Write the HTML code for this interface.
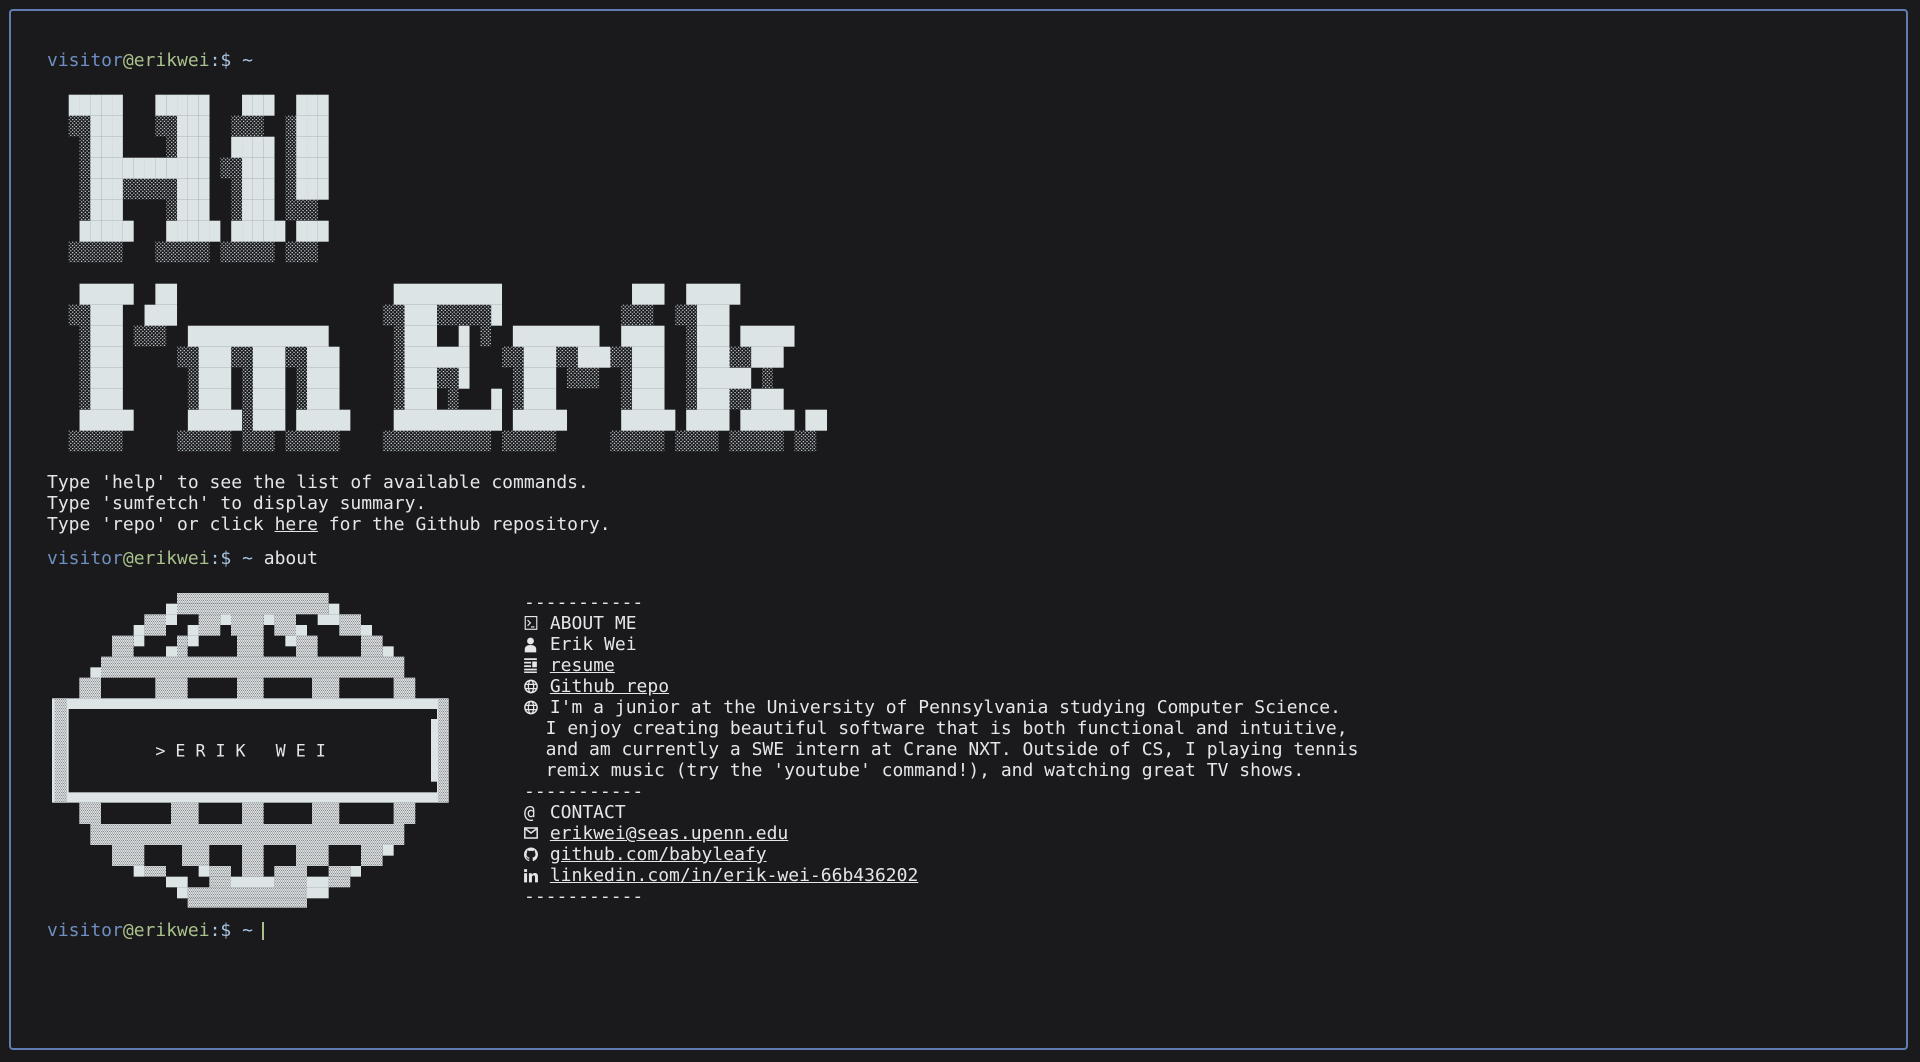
<!DOCTYPE html>
<html><head><meta charset="utf-8">
<style>
html,body{margin:0;padding:0;background:#1a1a1d;}
body{width:1920px;height:1062px;position:relative;overflow:hidden;font-family:"DejaVu Sans Mono","Liberation Mono",monospace;font-size:18px;line-height:21px;color:#e4e6e8;}
.frame{position:absolute;left:9px;top:9px;width:1899px;height:1041px;border:2px solid #5f7db0;border-radius:4px;box-sizing:border-box;}
.ln{position:absolute;white-space:pre;height:21px;}
.u{color:#6f8fc0}.g{color:#a9c18c}.b{color:#a8c4e0}
a{color:#e4e6e8;text-decoration:underline;}
.ic{display:inline-block;width:15px;height:21px;vertical-align:top;position:relative;}
.ic svg{position:absolute;left:0;top:3px;}
.cursor{position:absolute;left:262px;top:922px;width:1.5px;height:18px;background:#a9c18c;}
</style></head>
<body>
<div class="frame"></div>

<div class="ln" style="left:47px;top:50px"><span class="u">visitor</span><span class="g">@erikwei</span><span class="b">:$ ~</span></div>

<svg id="art" style="position:absolute;left:0;top:0" width="1920" height="480">
<defs>
<pattern id="sh" width="3.6" height="3.5" patternUnits="userSpaceOnUse">
<rect x="0" y="0" width="1.3" height="1.2" fill="#c9d2d6"/>
<rect x="1.8" y="1.75" width="1.3" height="1.2" fill="#c9d2d6"/>
</pattern>
</defs>
<g id="artg"></g>
</svg>

<div class="ln" style="left:47px;top:472px">Type 'help' to see the list of available commands.</div>
<div class="ln" style="left:47px;top:493px">Type 'sumfetch' to display summary.</div>
<div class="ln" style="left:47px;top:514px">Type 'repo' or click <a>here</a> for the Github repository.</div>

<div class="ln" style="left:47px;top:548px"><span class="u">visitor</span><span class="g">@erikwei</span><span class="b">:$ ~</span> about</div>

<svg style="position:absolute;left:47px;top:585px" width="410" height="330" viewBox="0 0 1230 990">
<defs>
<pattern id="sh2" width="6" height="9" patternUnits="userSpaceOnUse">
<rect width="6" height="9" fill="#d6dcdf"/>
<rect x="0" y="0" width="1.5" height="3" fill="#3a3f48"/>
<rect x="3" y="4.5" width="1.5" height="3" fill="#5a4a38"/>
</pattern>
</defs>
<g id="globe"></g>
<text x="325" y="515" font-family="DejaVu Sans Mono, monospace" font-size="50" fill="#e4e6e8" xml:space="preserve">&gt; E R I K   W E I</text>
</svg>

<div class="ln" style="left:524px;top:592px">-----------</div>
<div class="ln" style="left:524px;top:613px"><span class="ic"><svg width="14" height="15" viewBox="0 0 11 13"><rect x="0.5" y="0.5" width="10" height="11" fill="none" stroke="#e4e6e8"/><path d="M2.5 3.5l2.5 2.5-2.5 2.5M5.5 9.5h3" fill="none" stroke="#e4e6e8"/></svg></span> ABOUT ME</div>
<div class="ln" style="left:524px;top:634px"><span class="ic"><svg width="13" height="16" viewBox="0 0 11 14"><circle cx="5.5" cy="3.5" r="3" fill="#e4e6e8"/><path d="M0.5 13.5v-3c0-2 2-3.5 5-3.5s5 1.5 5 3.5v3z" fill="#e4e6e8"/></svg></span> Erik Wei</div>
<div class="ln" style="left:524px;top:655px"><span class="ic"><svg width="13" height="15" viewBox="0 0 11 13"><path d="M0 1h11M0 4h6M0 7h6M0 10h11M0 12.5h11" stroke="#e4e6e8" stroke-width="1.5"/><rect x="7" y="3" width="4" height="5" fill="#e4e6e8"/></svg></span> <a>resume</a></div>
<div class="ln" style="left:524px;top:676px"><span class="ic"><svg width="14" height="15" viewBox="0 0 12 13"><circle cx="6" cy="6.5" r="5.3" fill="none" stroke="#e4e6e8" stroke-width="1.3"/><ellipse cx="6" cy="6.5" rx="2.3" ry="5.3" fill="none" stroke="#e4e6e8" stroke-width="1.1"/><path d="M0.8 4.7h10.4M0.8 8.3h10.4" stroke="#e4e6e8" stroke-width="1.1"/></svg></span> <a>Github repo</a></div>
<div class="ln" style="left:524px;top:697px"><span class="ic"><svg width="14" height="15" viewBox="0 0 12 13"><circle cx="6" cy="6.5" r="5.3" fill="none" stroke="#e4e6e8" stroke-width="1.3"/><ellipse cx="6" cy="6.5" rx="2.3" ry="5.3" fill="none" stroke="#e4e6e8" stroke-width="1.1"/><path d="M0.8 4.7h10.4M0.8 8.3h10.4" stroke="#e4e6e8" stroke-width="1.1"/></svg></span> I'm a junior at the University of Pennsylvania studying Computer Science.</div>
<div class="ln" style="left:524px;top:718px">  I enjoy creating beautiful software that is both functional and intuitive,</div>
<div class="ln" style="left:524px;top:739px">  and am currently a SWE intern at Crane NXT. Outside of CS, I playing tennis</div>
<div class="ln" style="left:524px;top:760px">  remix music (try the 'youtube' command!), and watching great TV shows.</div>
<div class="ln" style="left:524px;top:781px">-----------</div>
<div class="ln" style="left:524px;top:802px"><span class="ic">@</span> CONTACT</div>
<div class="ln" style="left:524px;top:823px"><span class="ic"><svg width="14" height="14" viewBox="0 0 12 12"><rect x="0.7" y="1.7" width="10.6" height="8.6" fill="none" stroke="#e4e6e8" stroke-width="1.3"/><path d="M0.7 2l5.3 4 5.3-4" fill="none" stroke="#e4e6e8" stroke-width="1.3"/></svg></span> <a>erikwei@seas.upenn.edu</a></div>
<div class="ln" style="left:524px;top:844px"><span class="ic"><svg width="14" height="15" viewBox="0 0 16 16"><path fill="#e4e6e8" d="M8 0C3.58 0 0 3.580 0 8c0 3.54 2.290 6.530 5.470 7.59.4.07.55-.17.55-.38 0-.19-.01-.82-.01-1.49-2.010.37-2.530-.49-2.690-.94-.09-.23-.48-.94-.82-1.13-.28-.15-.68-.52-.01-.53.63-.01 1.08.58 1.23.82.72 1.21 1.87.87 2.33.66.07-.52.28-.87.51-1.07-1.78-.2-3.64-.89-3.64-3.95 0-.87.31-1.59.82-2.15-.08-.2-.36-1.02.08-2.12 0 0 .67-.21 2.2.82.64-.18 1.32-.27 2-.27.68 0 1.36.09 2 .27 1.53-1.04 2.2-.82 2.2-.82.44 1.1.16 1.92.08 2.12.51.56.82 1.27.82 2.15 0 3.07-1.87 3.75-3.65 3.95.29.25.54.73.54 1.48 0 1.07-.01 1.93-.01 2.2 0 .21.15.46.55.38A8.013 8.013 0 0016 8c0-4.42-3.58-8-8-8z"/></svg></span> <a>github.com/babyleafy</a></div>
<div class="ln" style="left:524px;top:865px"><span class="ic"><svg width="14" height="15" viewBox="0 0 12 13"><rect x="0" y="1" width="2.6" height="2.4" fill="#e4e6e8"/><rect x="0" y="4.5" width="2.6" height="8" fill="#e4e6e8"/><path d="M4.2 4.5h2.5v1.3c.6-1 1.6-1.5 2.7-1.5 1.8 0 2.6 1.1 2.6 3.1v5.1H9.5V8c0-1-.3-1.6-1.2-1.6-1 0-1.5.7-1.5 1.8v4.3H4.2z" fill="#e4e6e8"/></svg></span> <a>linkedin.com/in/erik-wei-66b436202</a></div>
<div class="ln" style="left:524px;top:886px">-----------</div>

<div class="ln" style="left:47px;top:920px"><span class="u">visitor</span><span class="g">@erikwei</span><span class="b">:$ ~</span></div>
<div class="cursor"></div>

<script>
(function(){
var NS="http://www.w3.org/2000/svg";
var g=document.getElementById("artg");
var CW=10.833,RH=21,X0=68.7;
function seg(y0,row,a,b,t){
  var r=document.createElementNS(NS,"rect");
  r.setAttribute("x",X0+a*CW);r.setAttribute("y",y0+row*RH);
  r.setAttribute("width",(b-a+1)*CW);r.setAttribute("height",RH);
  r.setAttribute("fill",t=="L"?"#dce4e6":"url(#sh)");
  g.appendChild(r);
}
var hi=["#####   #####   ###  ###",
"..###   ..###  ...  .###",
" .###    .###  #### .###",
" .########### ..### .###",
" .###.....###  .### .###",
" .###    .###  .### ...",
" #####   ##### ##### ###",
".....   ..... ..... ..."];
hi.forEach(function(s,row){for(var i=0;i<s.length;i++){var c=s[i];if(c=="#")seg(94.7,row,i,i,"L");else if(c==".")seg(94.7,row,i,i,"S");}});
var E=[
[0,1,5,"L"],[1,0,1,"S"],[1,2,4,"L"],[2,1,1,"S"],[2,2,4,"L"],[3,1,1,"S"],[3,2,4,"L"],[4,1,1,"S"],[4,2,4,"L"],[5,1,1,"S"],[5,2,4,"L"],[6,1,5,"L"],[7,0,4,"S"],
[0,8,9,"L"],[1,7,9,"L"],[2,6,8,"S"],
[2,11,23,"L"],[3,10,11,"S"],[3,12,14,"L"],[3,15,16,"S"],[3,17,19,"L"],[3,20,21,"S"],[3,22,24,"L"],
[4,11,11,"S"],[4,12,14,"L"],[4,16,16,"S"],[4,17,19,"L"],[4,21,21,"S"],[4,22,24,"L"],
[5,11,11,"S"],[5,12,14,"L"],[5,16,16,"S"],[5,17,19,"L"],[5,21,21,"S"],[5,22,24,"L"],
[6,11,15,"L"],[6,16,16,"S"],[6,17,19,"L"],[6,21,25,"L"],[7,10,14,"S"],[7,16,18,"S"],[7,20,24,"S"],
[0,30,39,"L"],[1,29,30,"S"],[1,31,33,"L"],[1,34,38,"S"],[1,39,39,"L"],[2,30,30,"S"],[2,31,33,"L"],[2,36,36,"L"],[2,38,38,"S"],
[3,30,30,"S"],[3,31,36,"L"],[4,30,30,"S"],[4,31,33,"L"],[4,34,35,"S"],[4,36,36,"L"],[5,30,30,"S"],[5,31,33,"L"],[5,35,35,"S"],[5,39,39,"L"],[6,30,39,"L"],[7,29,38,"S"],
[2,41,48,"L"],[3,40,41,"S"],[3,42,44,"L"],[3,45,46,"S"],[3,47,49,"L"],[4,41,41,"S"],[4,42,44,"L"],[4,46,48,"S"],[5,41,41,"S"],[5,42,44,"L"],[6,41,45,"L"],[7,40,44,"S"],
[0,52,54,"L"],[1,51,53,"S"],[2,51,54,"L"],[3,50,51,"S"],[3,52,54,"L"],[4,51,51,"S"],[4,52,54,"L"],[5,51,51,"S"],[5,52,54,"L"],[6,51,55,"L"],[7,50,54,"S"],
[0,57,61,"L"],[1,56,57,"S"],[1,58,60,"L"],[2,57,57,"S"],[2,58,60,"L"],[2,62,66,"L"],[3,57,57,"S"],[3,58,60,"L"],[3,61,62,"S"],[3,63,65,"L"],
[4,57,57,"S"],[4,58,62,"L"],[4,64,64,"S"],[5,57,57,"S"],[5,58,60,"L"],[5,61,62,"S"],[5,63,65,"L"],[6,57,60,"L"],[6,62,66,"L"],[7,56,59,"S"],[7,61,65,"S"],
[6,68,69,"L"],[7,67,68,"S"]];
E.forEach(function(e){seg(283.7,e[0],e[1],e[2],e[3]);});

var gl=document.getElementById("globe");
function R(x1,x2,y1,y2,t){var r=document.createElementNS(NS,"rect");r.setAttribute("x",x1);r.setAttribute("y",y1);r.setAttribute("width",x2-x1);r.setAttribute("height",y2-y1);r.setAttribute("fill",t=="L"?"#dce4e6":t=="D"?"#1a1a1d":"url(#sh2)");gl.appendChild(r);}
var rows=[
[24,56,[[390,845,"S"]]],
[56,88,[[357,390,"L"],[390,845,"S"],[845,877,"L"]]],
[88,120,[[292,357,"S"],[357,390,"L"],[455,520,"S"],[520,552,"L"],[552,650,"S"],[650,682,"L"],[682,747,"S"],[812,877,"L"],[877,942,"S"]]],
[120,152,[[260,292,"L"],[292,357,"S"],[422,455,"L"],[455,520,"S"],[552,650,"S"],[682,747,"S"],[747,780,"L"],[877,942,"S"],[942,975,"L"]]],
[152,184,[[195,260,"S"],[260,292,"L"],[390,422,"S"],[422,455,"L"],[570,650,"S"],[715,747,"L"],[747,812,"S"],[942,1007,"S"]]],
[184,215,[[195,260,"S"],[357,390,"L"],[390,422,"S"],[570,650,"S"],[747,812,"S"],[942,1007,"S"],[1007,1040,"L"]]],
[215,247,[[162,1072,"S"]]],
[247,278,[[130,162,"L"],[162,1072,"S"]]],
[278,340,[[97,162,"S"],[325,422,"S"],[570,650,"S"],[795,877,"S"],[1040,1105,"S"]]],
[340,653,[[15,1205,"L"]]],
[372,622,[[65,1170,"D"]]],
[340,653,[[22,60,"S"],[1172,1202,"S"]]],
[402,590,[[1152,1170,"L"]]],
[653,717,[[97,162,"S"],[372,455,"S"],[585,650,"S"],[795,877,"S"],[1040,1105,"S"]]],
[717,780,[[130,1072,"S"]]],
[780,843,[[195,292,"S"],[405,487,"S"],[585,650,"S"],[747,845,"S"],[942,1007,"S"]]],
[780,812,[[1007,1040,"L"]]],
[843,875,[[260,292,"L"],[292,357,"S"],[455,487,"L"],[487,552,"S"],[585,650,"S"],[682,780,"S"],[845,910,"S"],[910,942,"L"]]],
[875,907,[[357,422,"L"],[487,552,"S"],[552,682,"L"],[682,780,"S"],[780,845,"L"],[845,910,"S"]]],
[907,940,[[390,422,"L"],[422,780,"S"],[780,845,"L"]]],
[940,968,[[422,780,"S"]]]];
rows.forEach(function(r){r[2].forEach(function(s){R(s[0],s[1],r[0],r[1],s[2]);});});
})();
</script>
</body></html>
